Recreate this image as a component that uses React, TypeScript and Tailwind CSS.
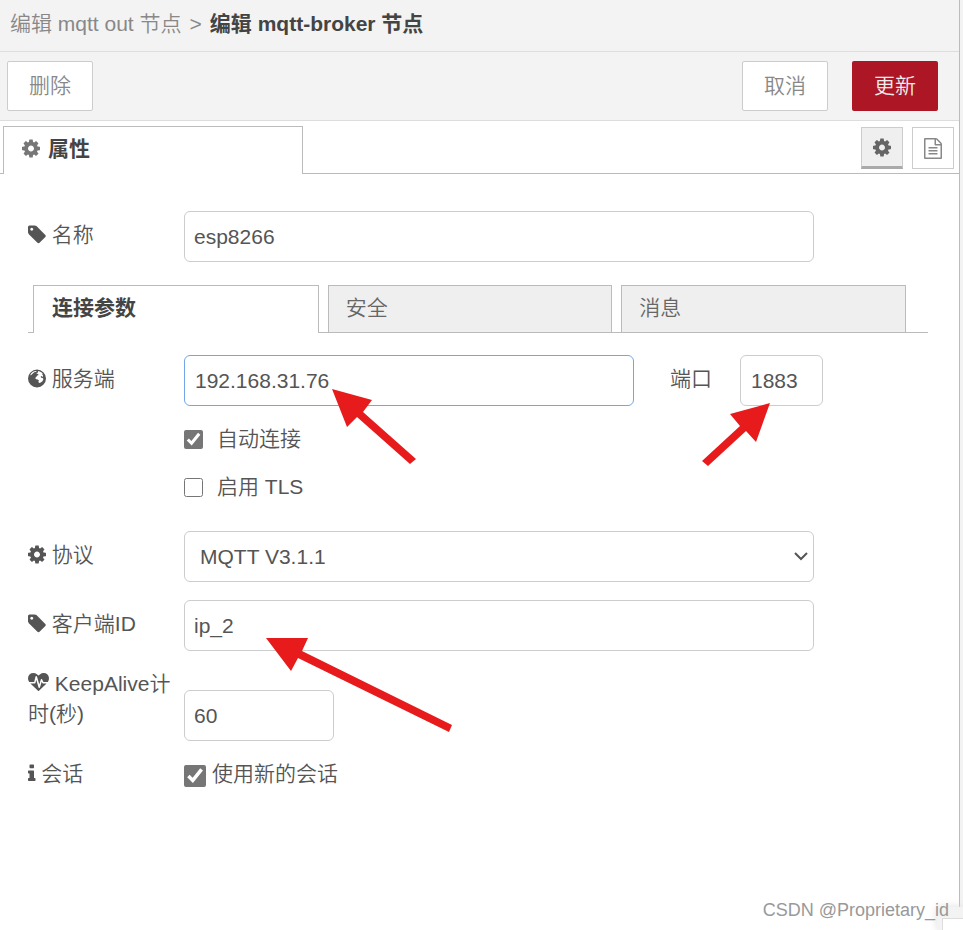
import { useState } from "react";
import type { ReactNode } from "react";

const icons = {
  cog: {
    width: 1536,
    left: 128,
    path: "M1152 896q0-106-75-181t-181-75-181 75-75 181 75 181 181 75 181-75 75-181zm512-109v222q0 12-8 23t-20 13l-185 28q-19 54-39 91 35 50 107 138 10 12 10 25t-9 23q-27 37-99 108t-94 71q-12 0-26-9l-138-108q-44 23-91 38-16 136-29 186-7 28-36 28h-222q-14 0-24.5-8.5t-11.5-21.5l-28-184q-49-16-90-37l-141 107q-10 9-25 9-14 0-25-11-126-114-165-168-7-10-7-23 0-12 8-23 15-21 51-66.5t54-70.5q-27-50-41-99l-183-27q-13-2-21-12.500t-8-23.500v-222q0-12 8-23t19-13l186-28q14-46 39-92-40-57-107-138-10-12-10-24 0-10 9-23 26-36 98.500-107.500t94.500-71.500q13 0 26 10l138 107q44-23 91-38 16-136 29-186 7-28 36-28h222q14 0 24.500 8.500t11.500 21.500l28 184q49 16 90 37l142-107q9-9 24-9 13 0 25 10 129 119 165 170 7 8 7 22 0 12-8 23-15 21-51 66.500t-54 70.500q26 50 41 98l183 28q13 2 21 12.500t8 23.500z",
  },
  tag: {
    width: 1536,
    left: 128,
    path: "M576 448q0-53-37.500-90.500t-90.500-37.500-90.500 37.500-37.500 90.500 37.500 90.500 90.500 37.500 90.500-37.500 37.500-90.500zm1067 576q0 53-37 90l-491 492q-39 37-91 37-53 0-90-37l-715-716q-38-37-64.500-101t-26.500-117v-416q0-52 38-90t90-38h416q53 0 117 26.500t102 64.500l715 714q37 39 37 91z",
  },
  file: {
    width: 1536,
    left: 128,
    path: "M1596 380q28 28 48 76t20 88v1152q0 40-28 68t-68 28h-1344q-40 0-68-28t-28-68v-1600q0-40 28-68t68-28h896q40 0 88 20t76 48zm-444-244v376h376q-10-29-22-41l-313-313q-12-12-41-22zm384 1528v-1024h-416q-40 0-68-28t-28-68v-416h-768v1536h1280zm-1024-864q0-14 9-23t23-9h704q14 0 23 9t9 23v64q0 14-9 23t-23 9h-704q-14 0-23-9t-9-23v-64zm736 224q14 0 23 9t9 23v64q0 14-9 23t-23 9h-704q-14 0-23-9t-9-23v-64q0-14 9-23t23-9h704zm0 256q14 0 23 9t9 23v64q0 14-9 23t-23 9h-704q-14 0-23-9t-9-23v-64q0-14 9-23t23-9h704z",
  },
  heartbeat: {
    width: 1792,
    left: 0,
    path: "M1280 896h305q-5 6-10 10.500t-9 7.500l-3 4-623 600q-18 18-44 18t-44-18l-624-602q-5-2-21-20h369q22 0 39.500-13.500t22.500-34.500l70-281 190 667q6 20 23 33t39 13q21 0 38-13t23-33l146-485 56 112q18 35 57 35zm512-428q0 145-103 300h-369l-111-221q-8-17-25.500-27t-36.500-8q-45 5-56 46l-129 430-196-686q-6-20-23.500-33t-39.500-13-39 13.500-22 34.500l-116 464h-423q-103-155-103-300 0-220 127-344t351-124q62 0 126.500 21.500t120 58 95.500 68.500 76 68q36-36 76-68t95.500-68.500 120-58 126.500-21.500q224 0 351 124t127 344z",
  },
  info: {
    width: 640,
    left: 576,
    path: "M1216 1344v128q0 26-19 45t-45 19h-512q-26 0-45-19t-19-45v-128q0-26 19-45t45-19h64v-384h-64q-26 0-45-19t-19-45v-128q0-26 19-45t45-19h384q26 0 45 19t19 45v576h64q26 0 45 19t19 45zm-128-1152v192q0 26-19 45t-45 19h-256q-26 0-45-19t-19-45v-192q0-26 19-45t45-19h256q26 0 45 19t19 45z",
  },
  globe: {
    width: 1536,
    left: 128,
    path: "M896 128a768 768 0 1 0 0 1536a768 768 0 1 0 0-1536zM420 430L560 310L760 250L880 300L790 350L700 340L560 440L450 560L360 640L330 580zM980 260L1130 290L1290 390L1400 520L1330 560L1420 640L1400 760L1290 690L1200 740L1270 830L1390 860L1440 960L1360 1120L1220 1240L1090 1270L1010 1190L1060 1060L960 990L820 960L740 860L830 760L920 640L1030 590L980 500L890 520L860 430L990 390z",
  },
};

function Icon({ name, className = "" }: { name: keyof typeof icons; className?: string }) {
  const { width, left, path } = icons[name];
  return (
    <svg
      viewBox={`${left} 0 ${width} 1792`}
      className={`inline-block h-[21px] w-auto shrink-0 align-[-3px] ${className}`}
      fill="currentColor"
      fillRule="evenodd"
      aria-hidden="true"
    >
      <path d={path} />
    </svg>
  );
}

function RowLabel({ htmlFor, icon, children }: { htmlFor: string; icon: keyof typeof icons; children: ReactNode }) {
  return (
    <label htmlFor={htmlFor} className="w-[156px] shrink-0 pb-1 pr-2 leading-[30px]">
      <Icon name={icon} /> {children}
    </label>
  );
}

const field = "h-[51px] min-w-0 rounded-md border border-[#ccc] bg-white px-[9px] outline-none";

function Arrows() {
  return (
    <svg className="pointer-events-none absolute left-0 top-0 h-[800px] w-[900px]" fill="#e71b1b" aria-hidden="true">
      <path d="M332 389L372 400L363 412L416 459L410 464L357 417L347 427z" />
      <path d="M770 403L730 414L740 426L702 461L708 466L746 431L756 442z" />
      <path d="M266 638L308 638L302 651L452 725L449 732L298 658L291 671z" />
    </svg>
  );
}

export default function App() {
  const [tab, setTab] = useState("连接参数");

  return (
    <div className="relative flex min-h-screen overflow-hidden bg-[#f3f3f3] pr-[3px] font-['Liberation_Sans','Noto_Sans_CJK_SC',sans-serif] text-[21px] font-[350] text-[#555]">
      <main className="min-w-0 flex-1 border-r border-[#bbb] bg-white">
        <h1 className="flex h-[52px] items-center gap-2 border-b border-[#ddd] bg-[#f3f3f3] px-[10px] pb-1 leading-[30px] text-[#888]">
          <a href="#mqtt-out">编辑 mqtt out 节点</a>
          <span>&gt;</span>
          <b className="font-bold text-[#444]">编辑 mqtt-broker 节点</b>
        </h1>

        <div className="flex h-[69px] items-center border-b border-[#ddd] bg-[#f3f3f3] pl-[7px] pr-[21px] text-[#888]">
          <button className="h-[50px] w-[86px] rounded-xs border border-[#ccc] bg-white">删除</button>
          <button className="ml-auto h-[50px] w-[86px] rounded-xs border border-[#ccc] bg-white">取消</button>
          <button className="ml-6 h-[50px] w-[86px] rounded-xs bg-[#ad1625] text-[#eee]">更新</button>
        </div>

        <div className="flex items-start border-b border-[#bbb] pl-[3px] pr-[5px] pt-[5px]">
          <div className="-mb-px h-12 w-[300px] border border-b-0 border-[#bbb] bg-white pl-[18px] pt-[7px] font-bold leading-[30px] text-[#444]">
            <Icon name="cog" className="mr-2 text-[#777]" />属性
          </div>
          <div className="ml-auto flex gap-[9px] pt-px">
            <button aria-label="属性" className="flex size-[42px] items-center justify-center border border-b-3 border-[#ccc] border-b-[#aaa] bg-[#efefef] text-[#666]">
              <Icon name="cog" />
            </button>
            <button aria-label="描述" className="flex size-[42px] items-center justify-center border border-[#ccc] bg-white text-[#888]">
              <Icon name="file" />
            </button>
          </div>
        </div>

        <form className="pb-10 pl-7 pr-[31px] pt-[37px]" onSubmit={(e) => e.preventDefault()}>
          <div className="flex items-center">
            <RowLabel htmlFor="name" icon="tag">名称</RowLabel>
            <input id="name" defaultValue="esp8266" className={`${field} w-[70%]`} />
          </div>

          <div className="mt-[23px] flex gap-[9px] border-b border-[#bbb] pl-[5px] pr-[22px]" role="tablist">
            {["连接参数", "安全", "消息"].map((t) => (
              <button
                key={t}
                type="button"
                role="tab"
                aria-selected={t === tab}
                onClick={() => setTab(t)}
                className={
                  t === tab
                    ? "-mb-px h-12 flex-1 border border-b-0 border-[#bbb] bg-white pb-1 pl-[18px] text-left font-bold text-[#444]"
                    : "h-[47px] flex-1 border border-b-0 border-[#bbb] bg-[#efefef] pb-[2px] pl-[17px] text-left text-[#666]"
                }
              >
                {t}
              </button>
            ))}
          </div>

          <div className="mt-[22px] flex items-center">
            <RowLabel htmlFor="server" icon="globe">服务端</RowLabel>
            <input id="server" defaultValue="192.168.31.76" className="h-[51px] w-1/2 min-w-0 rounded-md border border-[#71a7e8] bg-white px-[10px] outline-none" />
            <label htmlFor="port" className="ml-9 w-[70px] shrink-0 pb-1">端口</label>
            <input id="port" defaultValue="1883" className="h-[51px] w-[83px] rounded-md border border-[#ccc] bg-white px-[10px] outline-none" />
          </div>

          <div className="mt-[18px] flex flex-col gap-[18px] pl-[156px] leading-[30px]">
            <label className="flex items-center gap-[14px]">
              <input type="checkbox" defaultChecked className="size-[19px] accent-[#767676]" />自动连接
            </label>
            <label className="flex items-center gap-[14px]">
              <input type="checkbox" className="size-[19px] accent-[#767676]" />启用 TLS
            </label>
          </div>

          <div className="mt-[29px] flex items-center">
            <RowLabel htmlFor="protocol" icon="cog">协议</RowLabel>
            <div className="relative w-[70%]">
              <select id="protocol" className="h-[51px] w-full appearance-none rounded-md border border-[#ccc] bg-white px-[15px] outline-none">
                <option>MQTT V3.1.1</option>
                <option>MQTT V5</option>
              </select>
              <svg viewBox="0 0 14 10" className="pointer-events-none absolute right-[6px] top-5 h-[10px] w-[14px]" fill="none" stroke="#555" strokeWidth="2" aria-hidden="true">
                <path d="M1 2l6 6 6-6" />
              </svg>
            </div>
          </div>

          <div className="mt-[18px] flex items-center">
            <RowLabel htmlFor="client" icon="tag">客户端ID</RowLabel>
            <input id="client" defaultValue="ip_2" className={`${field} w-[70%]`} />
          </div>

          <div className="mt-[18px] flex items-end">
            <label htmlFor="keepalive" className="w-[156px] shrink-0 break-all pb-3 pr-2 leading-[30px]">
              <Icon name="heartbeat" /> KeepAlive计时(秒)
            </label>
            <input id="keepalive" defaultValue="60" className={`${field} w-[150px]`} />
          </div>

          <div className="mt-[18px] flex items-center">
            <RowLabel htmlFor="session" icon="info">会话</RowLabel>
            <input id="session" type="checkbox" defaultChecked className="size-[22px] accent-[#767676]" />
            <label htmlFor="session" className="pb-1 pl-[6px] leading-[30px]">使用新的会话</label>
          </div>
        </form>
      </main>

      <Arrows />

      <div className="absolute bottom-0 right-0 h-[23px] w-[26px] bg-[#f3f3f3] pl-[5px] pt-[11px] shadow-[0_0_8px_#ddd]">
        <div className="h-3 border-l border-t border-[#ddd] bg-white" />
      </div>
      <p className="absolute bottom-[6px] right-[14px] text-lg text-[#999]">CSDN @Proprietary_id</p>
    </div>
  );
}
